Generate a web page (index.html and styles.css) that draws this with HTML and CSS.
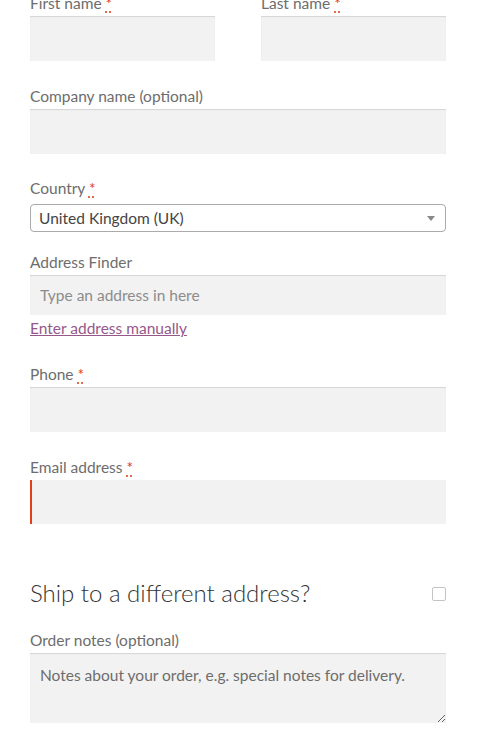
FILE: index.html
```html
<!DOCTYPE html>
<html lang="en">
<head>
<meta charset="utf-8">
<title>Checkout</title>
<link rel="stylesheet" href="styles.css">
</head>
<body>
<form class="checkout">
  <div class="pair">
    <div class="field">
      <label class="lbl">First name <abbr class="req" title="required">*</abbr></label>
      <input class="txt tall" type="text">
    </div>
    <div class="field">
      <label class="lbl">Last name <abbr class="req" title="required">*</abbr></label>
      <input class="txt tall" type="text">
    </div>
  </div>

  <div class="field gap-company">
    <label class="lbl">Company name (optional)</label>
    <input class="txt tall" type="text">
  </div>

  <div class="field gap-country">
    <label class="lbl lbl-country">Country <abbr class="req" title="required">*</abbr></label>
    <div class="select">
      <span class="select-text">United Kingdom (UK)</span>
      <span class="select-arrow"></span>
    </div>
  </div>

  <div class="field gap-finder">
    <label class="lbl">Address Finder</label>
    <input class="txt short" type="text" placeholder="Type an address in here">
    <a class="manual" href="#">Enter address manually</a>
  </div>

  <div class="field">
    <label class="lbl">Phone <abbr class="req" title="required">*</abbr></label>
    <input class="txt tall" type="tel">
  </div>

  <div class="field gap-email">
    <label class="lbl">Email address <abbr class="req" title="required">*</abbr></label>
    <input class="txt email invalid" type="email">
  </div>

  <div class="ship">
    <h3 class="ship-title">Ship to a different address?</h3>
    <input class="ship-check" type="checkbox">
  </div>

  <div class="field">
    <label class="lbl">Order notes (optional)</label>
    <textarea class="notes" placeholder="Notes about your order, e.g. special notes for delivery."></textarea>
  </div>
</form>
</body>
</html>
```

FILE: styles.css
```css
* { box-sizing: border-box; }

html, body {
  margin: 0;
  padding: 0;
  background: #ffffff;
}

body {
  font-family: Lato, "Noto Sans", sans-serif;
  font-size: 15.5px;
  color: #6d6d6d;
}

.checkout {
  width: 416px;
  margin: -8px 0 0 30px;
  display: flex;
  flex-direction: column;
}

.pair {
  display: flex;
  justify-content: space-between;
}

.pair .field {
  width: 185px;
}

.field {
  display: flex;
  flex-direction: column;
}

.lbl {
  display: block;
  line-height: 23px;
  height: 24px;
  color: #6d6d6d;
}

.lbl-country {
  margin-bottom: 3px;
}

.req {
  color: #e2401c;
  text-decoration: underline dotted;
  text-underline-offset: 3px;
  border: 0;
}

.txt {
  display: block;
  width: 100%;
  border: 0;
  margin: 0;
  padding: 0 10px;
  background: #f2f2f2;
  box-shadow: inset 0 1px 1px rgba(0, 0, 0, 0.125);
  font-family: inherit;
  font-size: 15.5px;
  color: #43454b;
  outline: none;
}

.txt::placeholder {
  color: #8c8c8c;
}

.tall { height: 45px; }
.short { height: 40px; }
.email { height: 44px; }

.invalid {
  box-shadow: inset 2px 0 0 #e2401c;
}

.gap-company { margin-top: 24px; }
.gap-country { margin-top: 23px; }
.gap-finder { margin-top: 19px; }
.gap-email { margin-top: 24px; }

.select {
  height: 28px;
  border: 1px solid #aaaaaa;
  border-radius: 4px;
  background: #ffffff;
  display: flex;
  align-items: center;
  justify-content: space-between;
  padding: 0 10px 0 8px;
}

.select-text {
  color: #444444;
  font-size: 15.5px;
}

.select-arrow {
  width: 0;
  height: 0;
  border-style: solid;
  border-width: 5px 4px 0 4px;
  border-color: #888888 transparent transparent transparent;
}

.manual {
  align-self: flex-start;
  margin-top: 2px;
  line-height: 22px;
  color: #96588a;
  text-decoration: underline;
  margin-bottom: 24px;
}

.ship {
  margin-top: 49px;
  display: flex;
  align-items: center;
  justify-content: space-between;
  height: 38px;
  margin-bottom: 18px;
}

.ship-title {
  margin: 0;
  font-weight: 300;
  font-size: 24px;
  color: #333333;
}

.ship-check {
  appearance: none;
  -webkit-appearance: none;
  margin: 4px 0 0 0;
  width: 14px;
  height: 14px;
  border: 1px solid #c4c4c4;
  border-radius: 2px;
  background: #ffffff;
}

.notes {
  display: block;
  width: 100%;
  height: 70px;
  margin: 0;
  border: 0;
  padding: 11px 10px;
  background: #f2f2f2;
  box-shadow: inset 0 1px 1px rgba(0, 0, 0, 0.125);
  font-family: inherit;
  font-size: 15.5px;
  line-height: 1.5;
  color: #43454b;
  resize: vertical;
  outline: none;
}

.notes::placeholder {
  color: #6d6d6d;
}
```
